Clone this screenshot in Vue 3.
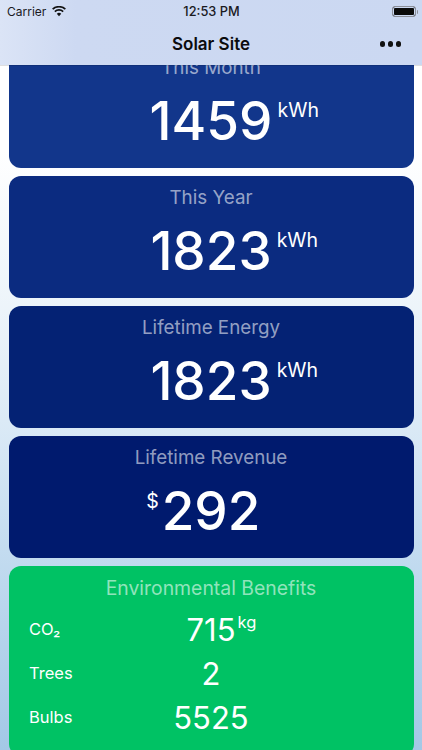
<script setup>
const cards = [
  { title: 'This Month', value: '1459', unit: 'kWh', tone: 'tone1' },
  { title: 'This Year', value: '1823', unit: 'kWh', tone: 'tone2' },
  { title: 'Lifetime Energy', value: '1823', unit: 'kWh', tone: 'tone3' },
  { title: 'Lifetime Revenue', value: '292', prefix: '$', tone: 'tone4' },
]
const rows = [
  { label: 'CO₂', value: '715', unit: 'kg' },
  { label: 'Trees', value: '2' },
  { label: 'Bulbs', value: '5525' },
]
</script>

<template>
  <div class="screen">
    <header class="nav">
      <div class="status">
        <div class="carrier">
          <span>Carrier</span>
          <svg class="wifi" viewBox="0 0 16 12" width="14" height="10.5">
            <path d="M8 11.6 5.5 8.8a3.6 3.6 0 0 1 5 0Z" fill="#111" />
            <path d="M3.9 7.1a6 6 0 0 1 8.2 0l1.3-1.5a8 8 0 0 0-10.8 0Z" fill="#111" />
            <path d="M1.4 4.4a9.7 9.7 0 0 1 13.2 0l1.3-1.5a11.7 11.7 0 0 0-15.8 0Z" fill="#111" />
          </svg>
        </div>
        <div class="clock">12:53 PM</div>
        <div class="battery"><span class="cell"></span><span class="cap"></span></div>
      </div>
      <div class="bar">
        <div class="title">Solar Site</div>
        <div class="more"><i></i><i></i><i></i></div>
      </div>
    </header>

    <main class="list">
      <section v-for="c in cards" :key="c.title" class="card" :class="c.tone">
        <div class="card-title">{{ c.title }}</div>
        <div class="big">
          <span class="big-num">
            <span v-if="c.prefix" class="prefix">{{ c.prefix }}</span>{{ c.value }}<span v-if="c.unit" class="suffix">{{ c.unit }}</span>
          </span>
        </div>
      </section>
      <section class="card green">
        <div class="card-title env">Environmental Benefits</div>
        <div class="rows">
          <div v-for="r in rows" :key="r.label" class="row">
            <span class="row-label">{{ r.label }}</span>
            <span class="row-value">{{ r.value }}<span v-if="r.unit" class="row-unit">{{ r.unit }}</span></span>
          </div>
        </div>
      </section>
    </main>
  </div>
</template>

<style>
html, body { margin: 0; background: #fff; }
</style>

<style scoped>
.screen {
  position: relative;
  width: 422px;
  height: 750px;
  overflow: hidden;
  font-family: Inter, "Liberation Sans", sans-serif;
  background: linear-gradient(180deg, #ffffff 20%, #e9f2f9 45%, #d6e7f5 60%, #bdd8ee 78%, #a3c8e6 100%);
}
.nav {
  position: absolute;
  inset: 0 0 auto 0;
  height: 65px;
  z-index: 2;
  background: linear-gradient(90deg, #dbe4f6 0%, #cdd9f2 18%, #cbd8f2 100%);
  box-shadow: 0 0.5px 0 rgba(0, 0, 0, 0.25);
}
.status {
  height: 21px;
  padding-top: 1px;
  display: grid;
  grid-template-columns: 1fr auto 1fr;
  align-items: center;
  font-size: 12px;
  color: #1a1a1f;
}
.carrier {
  display: flex;
  align-items: center;
  gap: 6px;
  padding-left: 7px;
}
.clock { font-weight: 500; font-size: 12.8px; padding-left: 1px; }
.battery {
  justify-self: end;
  display: flex;
  align-items: center;
  padding-right: 4px;
}
.cell {
  width: 22px;
  height: 9px;
  background: #0a0a0a;
  border: 1px solid #8b8f99;
  box-shadow: inset 0 0 0 1px #cbd8f2;
  border-radius: 3px;
}
.cap {
  width: 1.5px;
  height: 4px;
  background: #8b8f99;
  margin-left: 1px;
  border-radius: 0 1px 1px 0;
}
.bar {
  position: relative;
  height: 44px;
  display: flex;
  align-items: center;
  justify-content: center;
}
.title {
  font-size: 17px;
  font-weight: 600;
  color: #0b0b0d;
}
.more {
  position: absolute;
  right: 21px;
  top: 19px;
  display: flex;
  gap: 2.5px;
}
.more i {
  width: 5.5px;
  height: 5.5px;
  border-radius: 50%;
  background: #111;
}
.list {
  padding: 45.7px 8.5px 0;
  display: flex;
  flex-direction: column;
  gap: 8px;
}
.card {
  height: 122px;
  flex: none;
  border-radius: 12px;
  box-sizing: border-box;
  text-align: center;
  color: #fff;
}
.tone1 { background: #12368b; }
.tone2 { background: #0b2b80; }
.tone3 { background: #042274; }
.tone4 { background: #001a6e; }
.green { background: #00c264; height: 190px; }
.card-title {
  padding-top: 11.5px;
  font-size: 18.8px;
  line-height: 22px;
  color: rgba(255, 255, 255, 0.58);
}
.env { font-size: 19.4px; }
.big {
  margin-top: 7.5px;
  font-size: 53px;
  font-weight: 500;
  line-height: 68px;
}
.big-num { position: relative; display: inline-block; }
.suffix {
  position: absolute;
  left: 100%;
  top: 12px;
  margin-left: 5px;
  font-size: 19.5px;
  font-weight: 400;
  line-height: 22px;
}
.prefix {
  position: absolute;
  right: 100%;
  top: 13px;
  margin-right: 3px;
  font-size: 19.5px;
  font-weight: 400;
  line-height: 22px;
}
.rows { padding-top: 8px; }
.row {
  position: relative;
  height: 44px;
  display: flex;
  align-items: center;
  justify-content: center;
}
.row-label {
  position: absolute;
  left: 20.5px;
  font-size: 16.5px;
}
.row-value {
  position: relative;
  font-size: 31px;
}
.row-unit {
  position: absolute;
  left: 100%;
  top: 1px;
  margin-left: 2px;
  font-size: 16.5px;
  line-height: 20px;
}
</style>
